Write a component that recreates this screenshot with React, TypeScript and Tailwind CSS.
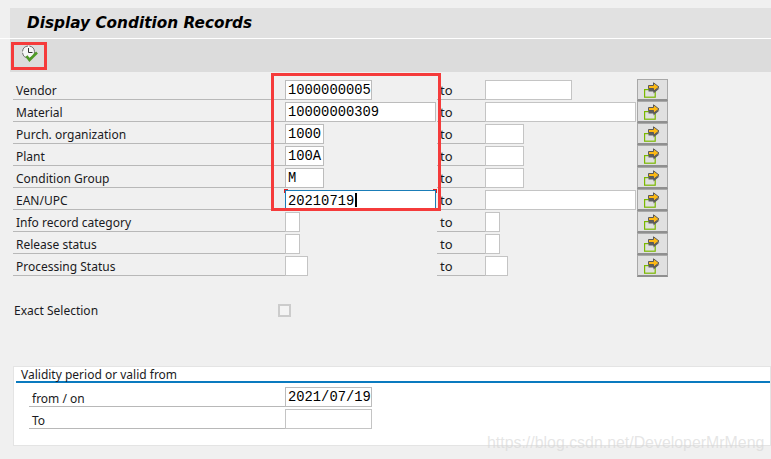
import React from "react";

type Row = { label: string; width: string; toWidth: string; value?: string; focused?: boolean };

const rows: Row[] = [
  { label: "Vendor", width: "w-[87px]", toWidth: "w-[87px]", value: "1000000005" },
  { label: "Material", width: "w-[151px]", toWidth: "w-[151px]", value: "10000000309" },
  { label: "Purch. organization", width: "w-[39px]", toWidth: "w-[39px]", value: "1000" },
  { label: "Plant", width: "w-[39px]", toWidth: "w-[39px]", value: "100A" },
  { label: "Condition Group", width: "w-[39px]", toWidth: "w-[39px]", value: "M" },
  { label: "EAN/UPC", width: "w-[151px]", toWidth: "w-[151px]", value: "20210719", focused: true },
  { label: "Info record category", width: "w-[15px]", toWidth: "w-[15px]" },
  { label: "Release status", width: "w-[15px]", toWidth: "w-[15px]" },
  { label: "Processing Status", width: "w-[23px]", toWidth: "w-[23px]" },
];

const ClockCheckIcon = () => (
  <svg width="18" height="18" viewBox="0 0 18 18" fill="none">
    <circle cx="7.5" cy="7" r="6" fill="#f6f6f6" stroke="#707070" strokeWidth="1" strokeDasharray="8 1.5" />
    <path d="M7.5 3V7.5H11.5" stroke="#333" strokeWidth="1" />
    <path d="M5.5 11L8.5 15L16 7.5" stroke="#4f9a26" strokeWidth="2.6" />
  </svg>
);

const ArrowIcon = () => (
  <svg width="17" height="16" viewBox="0 0 17 16" fill="none">
    <rect x="0.6" y="7.6" width="10.6" height="7.6" stroke="#7ab800" strokeWidth="1.2" fill="#e0e0e0" />
    <path d="M4.5 5V9.5H9.5V11.5L15.5 6.5Z" fill="#5f5f5f" />
    <path d="M4.5 3.5H9.5V0.8L15 5L9.5 9.2V6.5H4.5Z" fill="#fdb913" stroke="#5a5a5a" strokeWidth="1" />
  </svg>
);

const Field = ({ width, value, focused }: { width: string; value?: string; focused?: boolean }) => (
  <div
    className={`relative h-5 shrink-0 ${width} border bg-white pl-[2px] font-['Liberation_Mono',monospace] text-[13.8px] leading-[20px] text-black ${
      focused ? "border-[#1a7db8]" : value === undefined ? "border-[#c4c4c4]" : "border-[#bcbcbc]"
    }`}
  >
    {value}
    {focused && (
      <>
        <span className="ml-px inline-block h-[14px] w-[2px] translate-y-[2px] bg-black" />
        <span className="absolute -left-[2px] -top-[2px] h-[4px] w-[4px] border-l border-t border-[#e02020]" />
        <span className="absolute -right-[2px] -top-[2px] h-[4px] w-[4px] border-r border-t border-[#e02020]" />
      </>
    )}
  </div>
);

const App = () => {
  return (
    <div className="relative h-[459px] w-[771px] overflow-hidden bg-[#f0f0f0] pt-2 font-['Noto_Sans',sans-serif] text-[12px] text-[#1a1a22]">
      <div className="ml-[10px] flex h-[30px] items-center bg-[#e1e1e1] pl-[17px] font-['DejaVu_Sans',sans-serif] text-[15.3px] font-bold italic text-black">
        Display Condition Records
      </div>
      <div className="h-px bg-white" />
      <div className="ml-[10px] flex h-[33px] items-start bg-[#dcdcdc] pl-[11px] pt-[6px]">
        <ClockCheckIcon />
      </div>

      <div className="mt-[6px] flex flex-col">
        {rows.map((row) => (
          <div key={row.label} className="flex h-[22px] items-end">
            <div className="ml-[13px] flex h-full w-[272px] items-center border-b border-[#b8b8b8] pl-[3px] pt-1">
              {row.label}
            </div>
            <div className="w-[152px] shrink-0">
              <Field width={row.width} value={row.value} focused={row.focused} />
            </div>
            <div className="flex h-full w-[48px] items-center border-b border-[#b8b8b8] pl-[3px] pt-1 text-[13px]">
              to
            </div>
            <div className="w-[152px] shrink-0">
              <Field width={row.toWidth} />
            </div>
            <button className="mt-px flex h-[22px] w-[31px] items-center justify-center self-start border border-b-2 border-[#a8a8a8] border-b-[#8f8f8f] bg-[#e0e0e0]">
              <ArrowIcon />
            </button>
          </div>
        ))}
      </div>

      <div className="mt-[24px] flex h-5 items-center pl-[14px] pt-[2px]">
        <span className="w-[264px]">Exact Selection</span>
        <span className="-mt-[2px] h-[13px] w-[13px] border-2 border-[#cccccc] bg-[#f4f4f4]" />
      </div>

      <div className="ml-[13px] mt-[46px] h-[80px] border border-[#e4e4e4] bg-white pl-[2px]">
        <div className="h-[16px] border-b-2 border-[#0a7abf] pl-[5px] pt-px leading-[14px]">Validity period or valid from</div>
        <div className="mt-[4px] flex flex-col gap-[2px] pl-[13px]">
          <div className="flex h-5 items-end">
            <div className="flex h-full w-[256px] items-center border-b border-[#b8b8b8] pl-[3px] pt-1">from / on</div>
            <Field width="w-[87px]" value="2021/07/19" />
          </div>
          <div className="flex h-5 items-end">
            <div className="flex h-full w-[256px] items-center border-b border-[#b8b8b8] pl-[3px] pt-1">To</div>
            <Field width="w-[87px]" />
          </div>
        </div>
      </div>

      {/* red annotations drawn over the screenshot */}
      <div className="absolute left-[11px] top-[42px] h-[28px] w-[36px] border-[3px] border-[#f53b3b]" />
      <div className="absolute left-[271px] top-[73px] h-[138px] w-[170px] border-[3px] border-[#f53b3b]" />
      <div className="absolute left-[487px] top-[431px] font-['Liberation_Sans',sans-serif] text-[15.9px] text-[#d4d4d4]/60">
        https://blog.csdn.net/DeveloperMrMeng
      </div>
    </div>
  );
};

export default App;
